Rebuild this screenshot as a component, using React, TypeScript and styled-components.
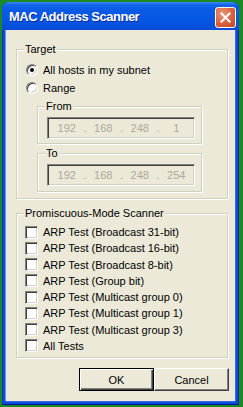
import React from 'react';
import styled, { createGlobalStyle } from 'styled-components';

const Global = createGlobalStyle`
  html, body { margin: 0; padding: 0; background: #1B8A24; }
  body {
    width: 243px; height: 407px; overflow: hidden;
    font-family: "Liberation Sans", Arial, sans-serif;
  }
`;

const Window = styled.div`
  margin: 2px 0 0 2px;
  width: 237px;
  height: 403px;
  display: flex;
  flex-direction: column;
  border-radius: 7px 7px 0 0;
  background: #0B4BDB;
  box-shadow: inset 0 -1px 0 #00169A, inset 1px 0 0 #0736C4, inset -1px 0 0 #00249E;
`;

const TitleBar = styled.div`
  height: 28px;
  flex: none;
  display: flex;
  align-items: flex-start;
  padding: 0 3px 0 7px;
  border-radius: 7px 7px 0 0;
  background: linear-gradient(180deg, #3D8BF5 0px, #0F63EA 3px, #0A5AE6 8px, #0556E3 18px, #0550DA 26px, #0A4BD6 28px);
`;

const Title = styled.span`
  flex: 1;
  margin-top: 7px;
  color: #fff;
  font-weight: bold;
  font-size: 13px;
  line-height: 16px;
  letter-spacing: -0.5px;
  text-shadow: 1px 1px 0 #0A2A9A;
`;

const CloseButton = styled.div`
  margin-top: 5px;
  width: 21px;
  height: 21px;
  box-sizing: border-box;
  border: 1px solid #fff;
  border-radius: 3px;
  background: radial-gradient(circle at 35% 30%, #E9977A 0%, #D9603C 55%, #C24522 100%);
  display: flex;
  align-items: center;
  justify-content: center;
`;

const Frame = styled.div`
  flex: 1;
  display: flex;
  padding: 0 4px 4px;
`;

const Body = styled.div`
  flex: 1;
  background: #ECE9D8;
  box-shadow: -1px 0 0 #6B95F0, 1px 0 0 #3A6BE0, 0 1px 0 #3A6BE0;
  display: flex;
  flex-direction: column;
  padding: 19px 0 0 10px;
  font-size: 11px;
  color: #000;
`;

const Group = styled.div<{ $w: number; $pl: number; $pt: number; $pb: number; $mt?: number; $ml?: number }>`
  position: relative;
  box-sizing: border-box;
  width: ${p => p.$w}px;
  margin-top: ${p => p.$mt ?? 0}px;
  margin-left: ${p => p.$ml ?? 0}px;
  padding: ${p => p.$pt}px 0 ${p => p.$pb}px ${p => p.$pl}px;
  border: 1px solid #D0D0BF;
  box-shadow: inset 1px 1px 0 #fff, 1px 1px 0 #fff;
  display: flex;
  flex-direction: column;
`;

const Caption = styled.span`
  position: absolute;
  top: -7px;
  left: 7px;
  padding: 0 1px;
  background: #ECE9D8;
  line-height: 13px;
  white-space: nowrap;
`;

const OptionRow = styled.label<{ $h: number }>`
  display: flex;
  align-items: center;
  gap: 5px;
  height: ${p => p.$h}px;
  white-space: nowrap;
`;

const Radio = styled.span<{ $on?: boolean }>`
  position: relative;
  width: 12px;
  height: 12px;
  box-sizing: border-box;
  border-radius: 50%;
  background: #fff;
  border: 1px solid;
  border-color: #808080 #fff #fff #808080;
  box-shadow: inset 1px 1px 0 #404040, inset -1px -1px 0 #D4D0C8;
  &::after {
    content: '';
    display: ${p => (p.$on ? 'block' : 'none')};
    position: absolute;
    left: 3px;
    top: 3px;
    width: 4px;
    height: 4px;
    border-radius: 50%;
    background: #000;
  }
`;

const Check = styled.span`
  width: 13px;
  height: 13px;
  box-sizing: border-box;
  background: #fff;
  border: 1px solid;
  border-color: #808080 #fff #fff #808080;
  box-shadow: inset 1px 1px 0 #404040, inset -1px -1px 0 #D4D0C8;
`;

const IpBox = styled.div`
  box-sizing: border-box;
  width: 148px;
  height: 22px;
  margin: 10px 0 0 9px;
  border: 1px solid;
  border-color: #808080 #fff #fff #808080;
  box-shadow: inset 1px 1px 0 #404040, inset -1px -1px 0 #D4D0C8;
  display: flex;
  align-items: center;
  padding: 0 3px 0 4px;
  color: #ACA899;
`;

const IpField = styled.span`
  width: 30px;
  text-align: center;
`;

const IpDot = styled.span`
  width: 7px;
  text-align: center;
`;

const ButtonRow = styled.div`
  display: flex;
  margin: 10px 0 0 63px;
`;

const Button = styled.div<{ $default?: boolean }>`
  width: 75px;
  height: 23px;
  box-sizing: border-box;
  display: flex;
  align-items: center;
  justify-content: center;
  background: #ECE9D8;
  border: 1px solid;
  border-color: ${p => (p.$default ? '#000' : '#fff #404040 #404040 #fff')};
  box-shadow: ${p =>
    p.$default
      ? 'inset 1px 1px 0 #fff, inset -1px -1px 0 #404040, inset -2px -2px 0 #808080'
      : 'inset -1px -1px 0 #808080'};
`;

const Ip: React.FC<{ parts: string[] }> = ({ parts }) => (
  <IpBox>
    {parts.map((p, i) => (
      <React.Fragment key={i}>
        {i > 0 && <IpDot>.</IpDot>}
        <IpField>{p}</IpField>
      </React.Fragment>
    ))}
  </IpBox>
);

const tests = [
  'ARP Test (Broadcast 31-bit)',
  'ARP Test (Broadcast 16-bit)',
  'ARP Test (Broadcast 8-bit)',
  'ARP Test (Group bit)',
  'ARP Test (Multicast group 0)',
  'ARP Test (Multicast group 1)',
  'ARP Test (Multicast group 3)',
  'All Tests',
];

export default function App() {
  return (
    <>
      <Global />
      <Window>
        <TitleBar>
          <Title>MAC Address Scanner</Title>
          <CloseButton>
            <svg width="11" height="11" viewBox="0 0 11 11">
              <path d="M1.5 1.5 L9.5 9.5 M9.5 1.5 L1.5 9.5" stroke="#fff" strokeWidth="2" strokeLinecap="square" />
            </svg>
          </CloseButton>
        </TitleBar>
        <Frame>
          <Body>
            <Group $w={212} $pl={9} $pt={11} $pb={6}>
              <Caption>Target</Caption>
              <OptionRow $h={18}>
                <Radio $on />
                All hosts in my subnet
              </OptionRow>
              <OptionRow $h={18}>
                <Radio />
                Range
              </OptionRow>
              <Group $w={165} $pl={0} $pt={0} $pb={4} $mt={9} $ml={11}>
                <Caption>From</Caption>
                <Ip parts={['192', '168', '248', '1']} />
              </Group>
              <Group $w={165} $pl={0} $pt={0} $pb={5} $mt={9} $ml={11}>
                <Caption>To</Caption>
                <Ip parts={['192', '168', '248', '254']} />
              </Group>
            </Group>
            <Group $w={212} $pl={8} $pt={10} $pb={3} $mt={14}>
              <Caption>Promiscuous-Mode Scanner</Caption>
              {tests.map(t => (
                <OptionRow key={t} $h={16.25}>
                  <Check />
                  {t}
                </OptionRow>
              ))}
            </Group>
            <ButtonRow>
              <Button $default>OK</Button>
              <Button>Cancel</Button>
            </ButtonRow>
          </Body>
        </Frame>
      </Window>
    </>
  );
}
